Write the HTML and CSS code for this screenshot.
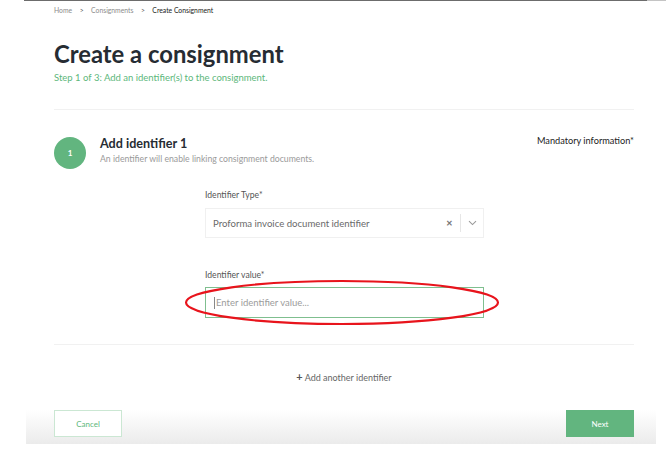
FILE: index.html
```html
<!DOCTYPE html>
<html>
<head>
<meta charset="utf-8">
<link rel="stylesheet" href="styles.css">
</head>
<body>
<div class="topline"><span class="gap"></span><span class="dark"></span><span class="light"></span></div>
<div class="page">
  <nav class="crumbs">
    <span class="crumb">Home</span><span class="sep">&gt;</span><span class="crumb">Consignments</span><span class="sep">&gt;</span><span class="crumb current">Create Consignment</span>
  </nav>
  <h1 class="title">Create a consignment</h1>
  <p class="step">Step 1 of 3: Add an identifier(s) to the consignment.</p>
  <hr class="rule top-rule">
  <section class="section">
    <div class="section-head">
      <div class="badge">1</div>
      <div class="head-text">
        <h2 class="section-title">Add identifier 1</h2>
        <p class="section-desc">An identifier will enable linking consignment documents.</p>
      </div>
      <div class="mandatory">Mandatory information*</div>
    </div>
    <div class="form">
      <label class="label">Identifier Type*</label>
      <div class="select">
        <span class="select-value">Proforma invoice document identifier</span>
        <span class="clear">&#x2715;</span>
        <span class="divider"></span>
        <span class="chev"><svg width="9" height="6" viewBox="0 0 9 6"><path d="M1 1.2 L4.5 4.6 L8 1.2" fill="none" stroke="#9a9a9a" stroke-width="1.1"/></svg></span>
      </div>
      <label class="label second">Identifier value*</label>
      <div class="input-wrap">
        <div class="input"><span class="caret"></span><span class="placeholder">Enter identifier value...</span></div>
        <svg class="annot" width="320" height="48" viewBox="0 0 320 48"><ellipse cx="158" cy="23.5" rx="156" ry="21.5" fill="none" stroke="#e8141c" stroke-width="2.2"/></svg>
      </div>
    </div>
  </section>
  <hr class="rule mid-rule">
  <div class="add-row"><span class="plus">+</span> Add another identifier</div>
</div>
<footer class="footer">
  <button class="btn cancel">Cancel</button>
  <button class="btn next">Next</button>
</footer>
</body>
</html>
```
FILE: styles.css
```css
* { box-sizing: border-box; }
html, body { margin: 0; padding: 0; background: #fff; }
body {
  font-family: "Lato", "Open Sans", sans-serif;
  color: #2b3139;
  width: 666px;
  height: 454px;
  overflow: hidden;
}
.topline { display: flex; height: 1px; }
.topline .gap { width: 24px; }
.topline .dark { flex: 1; background: #6c6c6c; }
.topline .light { width: 19px; background: #c4c4c4; }

.page { padding: 0 32px 0 54px; }

.crumbs { display: flex; align-items: center; font-size: 6.8px; height: 18px; color: #8b8b8b; }
.sep { margin: 0 7.5px; color: #555; }
.current { color: #222; }

.title { margin: 20px 0 0; font-size: 23.8px; font-weight: 700; line-height: 30px; color: #262c33; }
.step { margin: 3px 0 0; font-size: 9.5px; color: #5db77b; line-height: 12px; }

.rule { border: 0; border-top: 1px solid #f1f1f1; margin: 0; }
.top-rule { margin-top: 25px; }

.section-head { display: flex; align-items: flex-start; margin-top: 27px; }
.badge {
  width: 32px; height: 32px; border-radius: 50%;
  background: #62b57f; color: #fff; font-size: 8px; font-weight: 700;
  display: flex; align-items: center; justify-content: center;
}
.head-text { margin-left: 14px; flex: 1; }
.section-title { margin: -2px 0 0; font-size: 12.6px; font-weight: 700; line-height: 18px; color: #262c33; }
.section-desc { margin: 1px 0 0; font-size: 8.7px; color: #9a9a9a; line-height: 10px; }
.mandatory { font-size: 9.2px; color: #222; margin-top: -2px; }

.form { margin-left: 151px; width: 279px; margin-top: 21px; }
.label { display: block; font-size: 8.6px; color: #555; line-height: 10px; }
.label.second { margin-top: 32px; }
.select {
  margin-top: 8px; height: 30px; border: 1px solid #f0f0f0;
  display: flex; align-items: center; padding-left: 7px;
}
.select-value { flex: 1; font-size: 9.6px; color: #6a6a6a; }
.clear { font-size: 8px; color: #777; margin-right: 7px; font-weight: 700; }
.divider { width: 1px; height: 18px; background: #e6e6e6; }
.chev { width: 22px; display: flex; justify-content: center; }

.input-wrap { position: relative; margin-top: 7px; }
.input {
  height: 31px; border: 1px solid #7fbf8f; display: flex; align-items: center; padding-left: 8px;
}
.caret { width: 1px; height: 12px; background: #888; margin-right: 1px; }
.placeholder { font-size: 9.5px; color: #9c9c9c; }
.annot { position: absolute; left: -21px; top: -8px; pointer-events: none; }

.mid-rule { margin-top: 26px; }
.add-row { text-align: center; margin-top: 25px; font-size: 9px; color: #666; }
.plus { font-weight: 700; font-size: 11px; color: #555; }

.footer {
  margin: 27px 10px 0 26px;
  height: 34px;
  background: linear-gradient(#fff 0%, #ebebeb 100%);
  display: flex; justify-content: space-between; align-items: flex-start;
  padding: 0 22px 0 28px;
}
.btn { font-family: inherit; font-size: 8px; height: 27px; width: 68px; cursor: pointer; }
.cancel { background: #fff; border: 1px solid #cbe7d3; color: #5db77b; }
.next { background: #62b57f; border: 1px solid #62b57f; color: #fff; }
```
